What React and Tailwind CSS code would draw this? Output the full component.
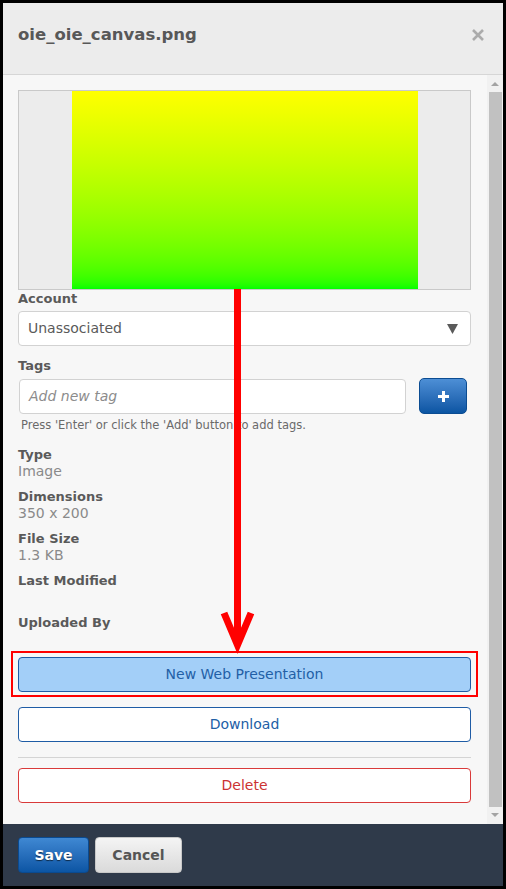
import React from 'react';

const font = { fontFamily: '"DejaVu Sans", "Liberation Sans", sans-serif' };

function Field({ label, value }) {
  return (
    <div className="mb-[10px]">
      <p className="text-[13px] leading-[16px] font-bold text-[#5a5a5a]">{label}</p>
      <p className="text-[14px] leading-[16px] text-[#8a8a8a]">{value || '\u00a0'}</p>
    </div>
  );
}

export default function App() {
  return (
    <div className="relative w-[506px] h-[889px] bg-black p-[3px]" style={font}>
      <div className="flex flex-col h-full">
        {/* header */}
        <div className="h-[72px] shrink-0 bg-[#ececec] border-b border-[#d6d6d6] flex items-start justify-between pl-[15px] pr-[18px] pt-[19px]">
          <h2 className="text-[16.5px] leading-[26px] font-semibold text-[#585858]">oie_oie_canvas.png</h2>
          <svg width="14" height="14" viewBox="0 0 14 14" className="mt-[6px]">
            <path d="M2 2 L12 12 M12 2 L2 12" stroke="#ababab" strokeWidth="2.6" />
          </svg>
        </div>

        {/* body */}
        <div className="flex-1 flex bg-[#f7f7f7] min-h-0">
          <div className="flex-1 pl-[15px] pr-[16px] pt-[15px]">
            <div className="h-[200px] bg-[#ececec] border border-[#c9c9c9] flex justify-center">
              <div className="w-[346px] h-full bg-gradient-to-b from-[#ffff00] to-[#00ff00]" />
            </div>

            <p className="mt-[1px] text-[13px] leading-[16px] font-bold text-[#5a5a5a]">Account</p>
            <div className="mt-[4px] h-[35px] bg-white border border-[#d2d2d2] rounded-[4px] flex items-center justify-between pl-[9px] pr-[12px]">
              <span className="text-[14px] text-[#5a5a5a]">Unassociated</span>
              <svg width="11" height="10" viewBox="0 0 11 10">
                <polygon points="0,0 11,0 5.5,10" fill="#5a5a5a" />
              </svg>
            </div>

            <p className="mt-[12px] text-[13px] leading-[16px] font-bold text-[#5a5a5a]">Tags</p>
            <div className="mt-[4px] flex items-center">
              <div className="ml-[1px] w-[387px] h-[35px] bg-white border border-[#d2d2d2] rounded-[4px] flex items-center pl-[9px]">
                <span className="text-[14px] italic text-[#8c8c8c]">Add new tag</span>
              </div>
              <button className="ml-[13px] w-[48px] h-[36px] rounded-[5px] bg-gradient-to-b from-[#4d8fd6] to-[#0a55a3] border border-[#0b4c92] flex items-center justify-center">
                <svg width="13" height="13" viewBox="0 0 13 13">
                  <path d="M6.5 1 V12 M1 6.5 H12" stroke="white" strokeWidth="3" />
                </svg>
              </button>
            </div>
            <p className="mt-[3px] ml-[3px] text-[11.5px] leading-[16px] text-[#6a6a6a]">Press 'Enter' or click the 'Add' button to add tags.</p>

            <div className="mt-[14px]">
              <Field label="Type" value="Image" />
              <Field label="Dimensions" value="350 x 200" />
              <Field label="File Size" value="1.3 KB" />
              <Field label="Last Modified" />
              <Field label="Uploaded By" />
            </div>

            <button className="w-full h-[35px] rounded-[4px] bg-[#a3cff8] border border-[#1f5ca5] text-[14px] text-[#2260a6]">New Web Presentation</button>
            <button className="mt-[15px] w-full h-[35px] rounded-[4px] bg-white border border-[#1f5ca5] text-[14px] text-[#2260a6]">Download</button>
            <div className="mt-[15px] h-px bg-[#d4d4d4]" />
            <button className="mt-[10px] w-full h-[35px] rounded-[4px] bg-white border border-[#d93a3a] text-[14px] text-[#cc3333]">Delete</button>
          </div>

          {/* scrollbar */}
          <div className="w-[16px] shrink-0 bg-[#f1f1f1] flex flex-col items-center">
            <svg width="8" height="17" viewBox="0 0 8 17">
              <polygon points="0,11 8,11 4,7" fill="#a3a3a3" />
            </svg>
            <div className="w-[13px] flex-1 bg-[#c1c1c1]" />
            <svg width="8" height="17" viewBox="0 0 8 17">
              <polygon points="0,6 8,6 4,10" fill="#a3a3a3" />
            </svg>
          </div>
        </div>

        {/* footer */}
        <div className="h-[62px] shrink-0 bg-[#2f3a4a] flex items-center gap-[6px] pl-[15px]">
          <button className="w-[71px] h-[36px] rounded-[4px] bg-gradient-to-b from-[#3f88d3] to-[#0b55a4] border border-[#0a4a90] text-[14px] font-bold text-white [text-shadow:0_1px_1px_rgba(0,0,0,0.6)]">Save</button>
          <button className="w-[87px] h-[36px] rounded-[4px] bg-gradient-to-b from-[#f4f4f4] to-[#dadada] border border-[#c8c8c8] text-[14px] font-bold text-[#555]">Cancel</button>
        </div>
      </div>

      {/* annotation overlay */}
      <svg className="absolute left-0 top-0 pointer-events-none" width="506" height="889">
        <line x1="237.5" y1="289" x2="237.5" y2="644" stroke="#ff0000" strokeWidth="7" />
        <polyline points="224,613 237.5,645 251,613" fill="none" stroke="#ff0000" strokeWidth="7" strokeLinejoin="miter" />
        <rect x="12" y="652" width="465" height="44" fill="none" stroke="#ff0000" strokeWidth="2" />
      </svg>
    </div>
  );
}
